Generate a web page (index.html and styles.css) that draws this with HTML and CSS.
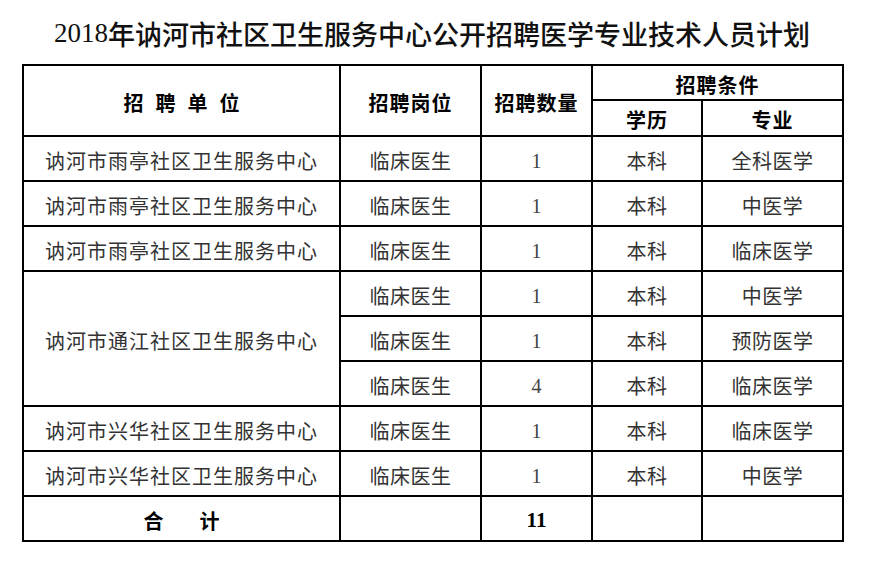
FILE: index.html
```html
<!DOCTYPE html>
<html lang="zh-CN">
<head>
<meta charset="utf-8">
<title>2018年讷河市社区卫生服务中心公开招聘医学专业技术人员计划</title>
<link rel="stylesheet" href="styles.css">
</head>
<body>
<div class="page">
  <h1 class="title"><span class="num">2018</span>年讷河市社区卫生服务中心公开招聘医学专业技术人员计划</h1>
  <table class="plan">
    <colgroup>
      <col class="c-unit">
      <col class="c-post">
      <col class="c-count">
      <col class="c-edu">
      <col class="c-major">
    </colgroup>
    <thead>
      <tr class="h1">
        <th rowspan="2"><span class="spaced">招聘单位</span></th>
        <th rowspan="2">招聘岗位</th>
        <th rowspan="2">招聘数量</th>
        <th colspan="2">招聘条件</th>
      </tr>
      <tr class="h2">
        <th>学历</th>
        <th>专业</th>
      </tr>
    </thead>
    <tbody>
      <tr>
        <td class="unit">讷河市雨亭社区卫生服务中心</td>
        <td>临床医生</td>
        <td class="num">1</td>
        <td>本科</td>
        <td>全科医学</td>
      </tr>
      <tr>
        <td class="unit">讷河市雨亭社区卫生服务中心</td>
        <td>临床医生</td>
        <td class="num">1</td>
        <td>本科</td>
        <td>中医学</td>
      </tr>
      <tr>
        <td class="unit">讷河市雨亭社区卫生服务中心</td>
        <td>临床医生</td>
        <td class="num">1</td>
        <td>本科</td>
        <td>临床医学</td>
      </tr>
      <tr>
        <td class="unit" rowspan="3">讷河市通江社区卫生服务中心</td>
        <td>临床医生</td>
        <td class="num">1</td>
        <td>本科</td>
        <td>中医学</td>
      </tr>
      <tr>
        <td>临床医生</td>
        <td class="num">1</td>
        <td>本科</td>
        <td>预防医学</td>
      </tr>
      <tr>
        <td>临床医生</td>
        <td class="num">4</td>
        <td>本科</td>
        <td>临床医学</td>
      </tr>
      <tr>
        <td class="unit">讷河市兴华社区卫生服务中心</td>
        <td>临床医生</td>
        <td class="num">1</td>
        <td>本科</td>
        <td>临床医学</td>
      </tr>
      <tr>
        <td class="unit">讷河市兴华社区卫生服务中心</td>
        <td>临床医生</td>
        <td class="num">1</td>
        <td>本科</td>
        <td>中医学</td>
      </tr>
      <tr class="total">
        <td><span class="total-label">合计</span></td>
        <td></td>
        <td class="num">11</td>
        <td></td>
        <td></td>
      </tr>
    </tbody>
  </table>
</div>
</body>
</html>
```

FILE: styles.css
```css
html, body {
  margin: 0;
  padding: 0;
  background: #fff;
}

body {
  font-family: "Noto Sans CJK SC", "Liberation Serif", sans-serif;
  color: #2a2a2a;
}

.page {
  width: 820px;
  padding-left: 22px;
}

.title {
  margin: 0;
  height: 64px;
  display: flex;
  align-items: center;
  justify-content: center;
  font-size: 27px;
  font-weight: 500;
  color: #111;
  line-height: 1;
  padding-top: 2px;
  box-sizing: border-box;
}

.title .num {
  font-family: "Liberation Serif", serif;
  font-weight: 400;
}

.plan {
  width: 820px;
  table-layout: fixed;
  border-collapse: collapse;
  border: 2px solid #000;
}

.c-unit { width: 317px; }
.c-post { width: 141px; }
.c-count { width: 111px; }
.c-edu { width: 110px; }
.c-major { width: 141px; }

.plan th,
.plan td {
  border: 2px solid #000;
  padding: 4px 0 0 0;
  text-align: center;
  vertical-align: middle;
  line-height: 1;
  white-space: nowrap;
}

.plan th {
  font-size: 20px;
  font-weight: 700;
  color: #000;
  letter-spacing: 1px;
}

.plan .h1 { height: 35px; }
.plan .h2 { height: 36px; }

.plan .spaced {
  letter-spacing: 12px;
  padding-left: 12px;
}

.plan td {
  font-size: 20px;
  font-weight: 400;
  letter-spacing: 0.5px;
  color: #333;
}

.plan tbody tr { height: 45px; }

.plan td.unit {
  letter-spacing: 1px;
}

.plan td.num {
  font-family: "Liberation Serif", serif;
  font-size: 20px;
  letter-spacing: 0;
  color: #444;
}

.plan .total td {
  font-weight: 700;
  color: #000;
}

.plan .total td.num {
  color: #000;
  font-size: 21px;
}

.total-label {
  letter-spacing: 36px;
  padding-left: 36px;
}
```
